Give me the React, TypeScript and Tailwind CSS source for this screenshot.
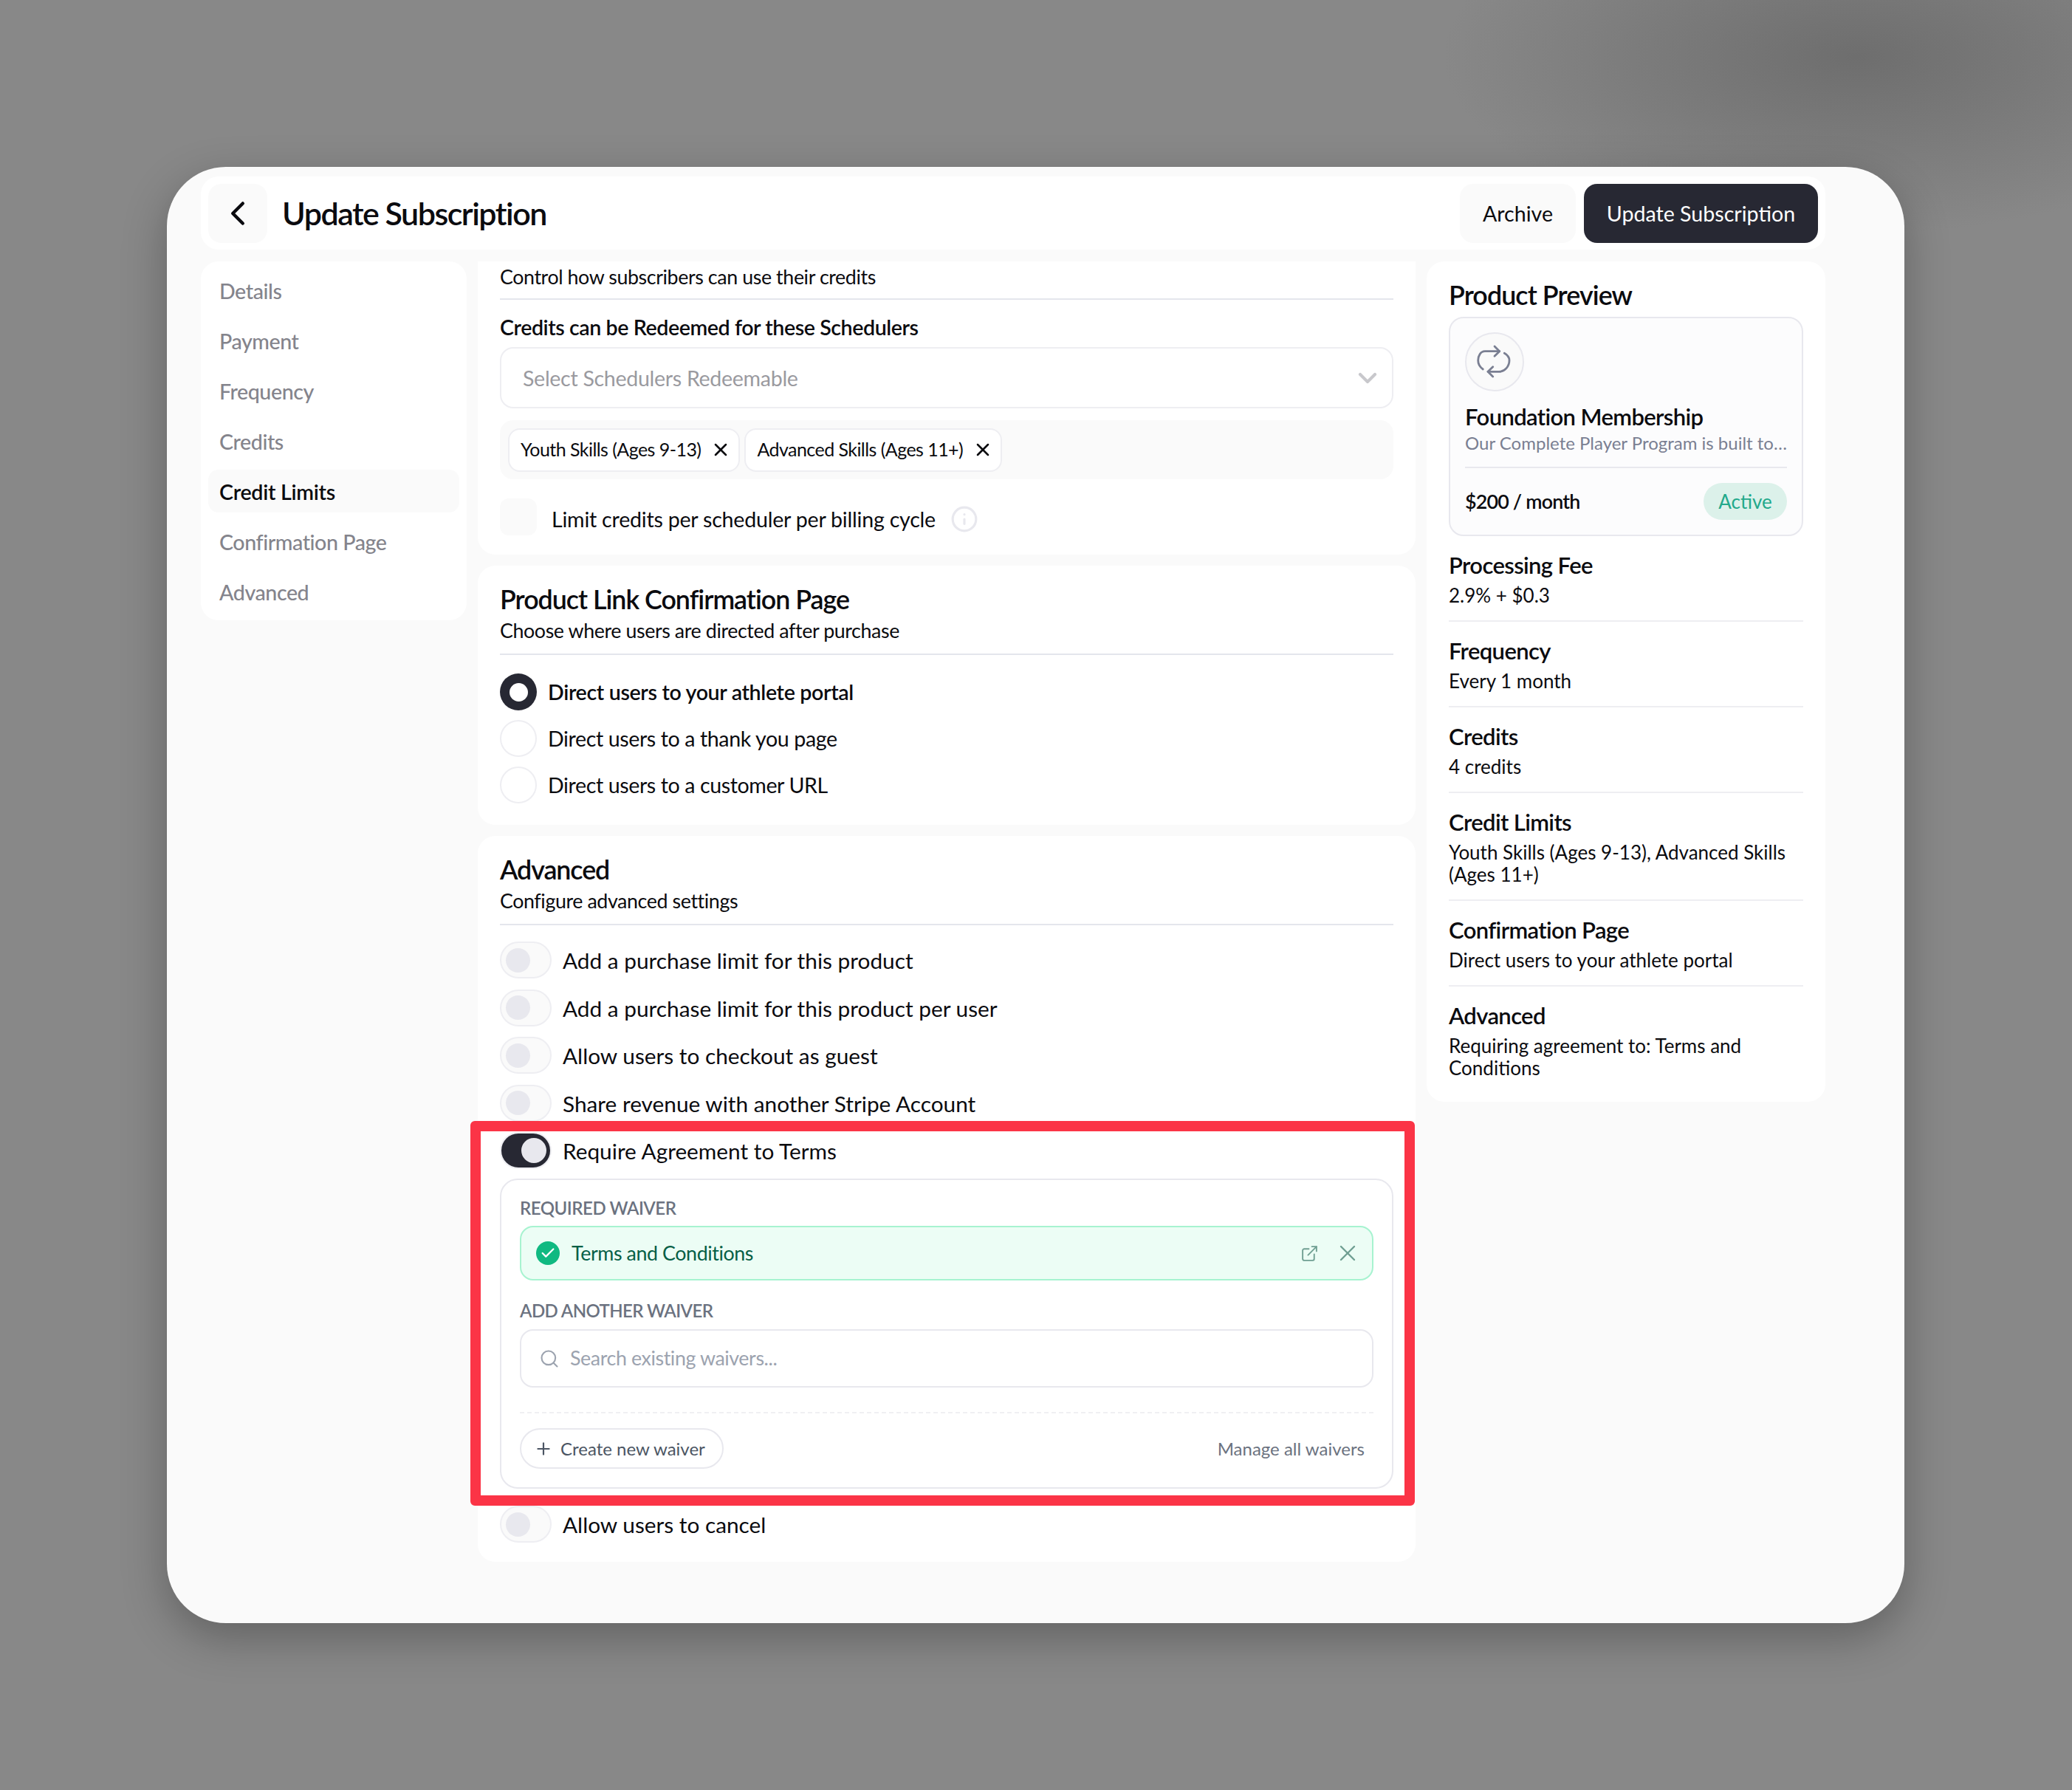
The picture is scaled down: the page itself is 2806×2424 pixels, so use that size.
import React from "react";
import { Check, ChevronDown, ChevronLeft, ExternalLink, Info, Plus, Search, X } from "lucide-react";

const navItems = ["Details", "Payment", "Frequency", "Credits", "Credit Limits", "Confirmation Page", "Advanced"];

const summary = [
    { title: "Processing Fee", value: "2.9% + $0.3" },
    { title: "Frequency", value: "Every 1 month" },
    { title: "Credits", value: "4 credits" },
    { title: "Credit Limits", value: "Youth Skills (Ages 9-13), Advanced Skills (Ages 11+)" },
    { title: "Confirmation Page", value: "Direct users to your athlete portal" },
    { title: "Advanced", value: "Requiring agreement to: Terms and Conditions" },
];

function Toggle({ label }: { label: string }) {
    return (
        <div className="flex items-center gap-[15px] h-[50px]">
            <div className="w-[70px] h-[50px] rounded-full bg-[#fafafa] border-2 border-[#eeeef2] flex items-center pl-[6px] shrink-0">
                <div className="w-[33px] h-[33px] rounded-full bg-[#e8e8ee]" />
            </div>
            <span className="text-[29.8px] leading-none pt-[2px]">{label}</span>
        </div>
    );
}

function Radio({ label, checked }: { label: string; checked?: boolean }) {
    return (
        <div className="flex items-center gap-[15px] h-[50px]">
            {checked ? (
                <div className="w-[50px] h-[50px] rounded-full bg-[#272833] flex items-center justify-center shrink-0">
                    <div className="w-[25px] h-[25px] rounded-full bg-white" />
                </div>
            ) : (
                <div className="w-[50px] h-[50px] rounded-full bg-white border-2 border-[#eeeef2] shrink-0" />
            )}
            <span className={`text-[28.6px] leading-none pt-[1px] ${checked ? "font-semibold tracking-[-0.012em]" : "tracking-[-0.014em]"}`}>{label}</span>
        </div>
    );
}

function Tag({ label }: { label: string }) {
    return (
        <div className="h-[59px] bg-white border-2 border-[#eeeef2] rounded-[16px] flex items-center pl-[15px] pr-[10px] gap-[13px]">
            <span className="text-[25px] tracking-[-0.022em]">{label}</span>
            <X size={28} strokeWidth={2.2} />
        </div>
    );
}

function App() {
    return (
        <div className="w-full h-[2424px] overflow-hidden bg-[#888888] bg-[radial-gradient(ellipse_560px_240px_at_2514px_77px,#6e6e6e,transparent)] pl-[226px] pt-[226px] font-['Lato',sans-serif] text-[#0b0b0f]">
            <div className="w-[2353px] h-[1972px] rounded-[80px] bg-[#fafafa] pl-[46px] pr-[107px] pt-[13px] shadow-[0_20px_60px_rgba(0,0,0,0.28)]">
                {/* top bar */}
                <div className="h-[99px] bg-white rounded-[24px] flex items-center px-[10px]">
                    <div className="w-[80px] h-[80px] rounded-[18px] bg-[#fafafa] flex items-center justify-center">
                        <ChevronLeft size={54} strokeWidth={2} className="text-[#0b0b0f]" />
                    </div>
                    <span className="ml-[20px] pt-[2px] text-[43px] font-semibold tracking-[-0.035em]">Update Subscription</span>
                    <div className="ml-auto flex gap-[11px]">
                        <div className="w-[157px] h-[80px] rounded-[18px] bg-[#fafafa] flex items-center justify-center text-[28.6px] pt-[1px]">Archive</div>
                        <div className="w-[317px] h-[80px] rounded-[18px] bg-[#272833] flex items-center justify-center text-[28.6px] pt-[1px] text-white">Update Subscription</div>
                    </div>
                </div>

                <div className="flex gap-[15px] mt-[16px] items-start">
                    {/* left nav */}
                    <div className="w-[360px] bg-white rounded-[24px] p-[10px] flex flex-col gap-[10px] shrink-0">
                        {navItems.map((item) => (
                            <div
                                key={item}
                                className={`h-[58px] rounded-[14px] flex items-center pl-[15px] pt-[2px] text-[28.6px] ${
                                    item === "Credit Limits"
                                        ? "bg-[#fafafa] font-semibold text-[#0b0b0f] tracking-[-0.01em]"
                                        : "text-[#84848c] font-medium tracking-[-0.015em]"
                                }`}
                            >
                                {item}
                            </div>
                        ))}
                    </div>

                    {/* middle column */}
                    <div className="w-[1270px] flex flex-col gap-[15px] shrink-0">
                        <div className="h-[397px] bg-white rounded-b-[24px] px-[30px] overflow-hidden">
                            <div className="h-[52px] border-b-2 border-[#e4e6ec] text-[26.8px] leading-[42px] tracking-[-0.015em]">Control how subscribers can use their credits</div>
                            <div className="mt-[21px] text-[28.6px] leading-[32px] font-semibold tracking-[-0.015em]">Credits can be Redeemed for these Schedulers</div>
                            <div className="mt-[11px] h-[83px] rounded-[18px] border-2 border-[#eeeef2] flex items-center pl-[29px] pr-[13px] justify-between">
                                <span className="text-[28.6px] tracking-[-0.011em] pt-[1px] text-[#9a9a9f]">Select Schedulers Redeemable</span>
                                <ChevronDown size={40} strokeWidth={2.5} className="text-[#c8c8cc]" />
                            </div>
                            <div className="mt-[16px] h-[80px] rounded-[18px] bg-[#fafafa] flex items-center pl-[11px] gap-[6px]">
                                <Tag label="Youth Skills (Ages 9-13)" />
                                <Tag label="Advanced Skills (Ages 11+)" />
                            </div>
                            <div className="mt-[26px] flex items-center">
                                <div className="w-[50px] h-[50px] rounded-[12px] bg-[#fafafa]" />
                                <span className="ml-[20px] mt-[6px] text-[28.6px] tracking-[-0.008em]">Limit credits per scheduler per billing cycle</span>
                                <Info size={38} strokeWidth={2} className="ml-[20px] mt-[6px] text-[#e8e8ee]" />
                            </div>
                        </div>

                        <div className="h-[351px] bg-white rounded-[24px] px-[30px] pt-[24px]">
                            <div className="text-[35.8px] leading-[44px] font-semibold tracking-[-0.028em]">Product Link Confirmation Page</div>
                            <div className="text-[26.8px] leading-[32px] mt-[4px] tracking-[-0.015em]">Choose where users are directed after purchase</div>
                            <div className="mt-[15px] border-t-2 border-[#e4e6ec]" />
                            <div className="mt-[25px] flex flex-col gap-[13px]">
                                <Radio label="Direct users to your athlete portal" checked />
                                <Radio label="Direct users to a thank you page" />
                                <Radio label="Direct users to a customer URL" />
                            </div>
                        </div>

                        <div className="relative h-[983px] bg-white rounded-[24px] px-[30px] pt-[24px]">
                            <div className="text-[35.8px] leading-[44px] font-semibold tracking-[-0.03em]">Advanced</div>
                            <div className="text-[26.8px] leading-[32px] mt-[4px] tracking-[-0.015em]">Configure advanced settings</div>
                            <div className="mt-[15px] border-t-2 border-[#e4e6ec]" />
                            <div className="mt-[22px] flex flex-col gap-[14.5px]">
                                <Toggle label="Add a purchase limit for this product" />
                                <Toggle label="Add a purchase limit for this product per user" />
                                <Toggle label="Allow users to checkout as guest" />
                                <Toggle label="Share revenue with another Stripe Account" />
                                <div className="flex items-center gap-[15px] h-[50px]">
                                    <div className="w-[70px] h-[50px] rounded-full bg-[#272833] border-2 border-[#eeeef2] flex items-center justify-end pr-[5px] shrink-0">
                                        <div className="w-[34px] h-[34px] rounded-full bg-[#e8e8ee]" />
                                    </div>
                                    <span className="text-[29.8px] leading-none pt-[2px]">Require Agreement to Terms</span>
                                </div>
                            </div>

                            {/* waiver picker */}
                            <div className="mt-[13px] h-[420px] rounded-[24px] border-2 border-[#e8e8ee] px-[25px] pt-[24px]">
                                <div className="text-[24px] leading-[28px] font-semibold text-[#6b7280] tracking-[-0.02em]">REQUIRED WAIVER</div>
                                <div className="mt-[10px] h-[74px] rounded-[18px] bg-[#ecfdf5] border-2 border-[#a7f3d0] flex items-center pl-[20px] pr-[15px]">
                                    <div className="w-[32px] h-[32px] rounded-full bg-[#10b981] flex items-center justify-center">
                                        <Check size={22} strokeWidth={2.5} className="text-white" />
                                    </div>
                                    <span className="ml-[16px] text-[26.8px] tracking-[-0.015em] text-[#065f46]">Terms and Conditions</span>
                                    <ExternalLink size={25} strokeWidth={1.8} className="ml-auto text-[#6f9f92]" />
                                    <X size={36} strokeWidth={1.6} className="ml-[21px] text-[#6f9f92]" />
                                </div>
                                <div className="mt-[27px] text-[24px] leading-[28px] font-semibold text-[#6b7280] tracking-[-0.025em]">ADD ANOTHER WAIVER</div>
                                <div className="mt-[11px] h-[79px] rounded-[18px] border-2 border-[#e8e8ee] flex items-center pl-[24px]">
                                    <Search size={28} strokeWidth={1.8} className="text-[#9ca3af]" />
                                    <span className="ml-[14px] text-[26.8px] text-[#9ca3af] tracking-[-0.015em]">Search existing waivers...</span>
                                </div>
                                <div className="mt-[33px] border-t-2 border-dashed border-[#f0f0f3]" />
                                <div className="mt-[20px] flex items-center justify-between">
                                    <div className="h-[55px] w-[276px] rounded-full border-2 border-[#e8e8ee] flex items-center pl-[17px] text-[#4b5563]">
                                        <Plus size={26} strokeWidth={2} />
                                        <span className="ml-[10px] text-[24px]">Create new waiver</span>
                                    </div>
                                    <span className="mr-[12px] text-[24px] text-[#6b7280]">Manage all waivers</span>
                                </div>
                            </div>

                            <div className="mt-[23px]">
                                <Toggle label="Allow users to cancel" />
                            </div>

                            {/* annotation frame */}
                            <div className="absolute left-[-10px] top-[386px] w-[1279px] h-[521px] rounded-[6px] border-[14px] border-[#fb3446]" />
                        </div>
                    </div>

                    {/* right summary */}
                    <div className="w-[540px] h-[1138px] bg-white rounded-[24px] px-[30px] pt-[24px] shrink-0">
                        <div className="text-[35.8px] leading-[44px] font-semibold tracking-[-0.025em]">Product Preview</div>
                        <div className="mt-[7px] h-[297px] rounded-[20px] bg-[#fcfcfd] border-2 border-[#e8e8ee] px-[20px] pt-[19px]">
                            <div className="w-[80px] h-[80px] rounded-full bg-[#fafafa] border-2 border-[#e8e8ee] flex items-center justify-center">
                                <svg width="70" height="70" viewBox="0 0 70 70" fill="none" stroke="#7a7f92" strokeWidth="2.8" strokeLinecap="round" strokeLinejoin="round">
                                    <path d="M41.7 20.7H22C16 20.7 12.7 27 12.7 33C12.7 38 15 42 19.3 45" />
                                    <path d="M35 14L41.7 20.7L35 27.3" />
                                    <path d="M26 48.3H41C49 48.3 55 41 55 33C55 29 53 26 48.3 23.3" />
                                    <path d="M32.7 41.7L26 48.3L32.7 55" />
                                </svg>
                            </div>
                            <div className="mt-[14px] text-[31px] leading-[40px] font-semibold tracking-[-0.02em]">Foundation Membership</div>
                            <div className="text-[24px] leading-[32px] text-[#7a7f92] whitespace-nowrap">Our Complete Player Program is built to…</div>
                            <div className="mt-[16px] border-t-2 border-[#e8e8ee]" />
                            <div className="mt-[20px] flex items-center justify-between">
                                <span className="text-[26.8px] font-semibold tracking-[-0.03em]">$200 / month</span>
                                <span className="w-[113px] h-[50px] rounded-full bg-[#dcf1ea] text-[#23a98b] text-[26px] flex items-center justify-center">Active</span>
                            </div>
                        </div>
                        <div className="flex flex-col">
                            {summary.map((s, i) => (
                                <div key={s.title} className={`pt-[20px] pb-[19px] ${i < summary.length - 1 ? "border-b-2 border-[#eeeef2]" : ""}`}>
                                    <div className="text-[31px] leading-[38px] font-semibold tracking-[-0.02em]">{s.title}</div>
                                    <div className="mt-[7px] text-[26px] leading-[30px]">{s.value}</div>
                                </div>
                            ))}
                        </div>
                    </div>
                </div>
            </div>
        </div>
    );
}

export default App;
